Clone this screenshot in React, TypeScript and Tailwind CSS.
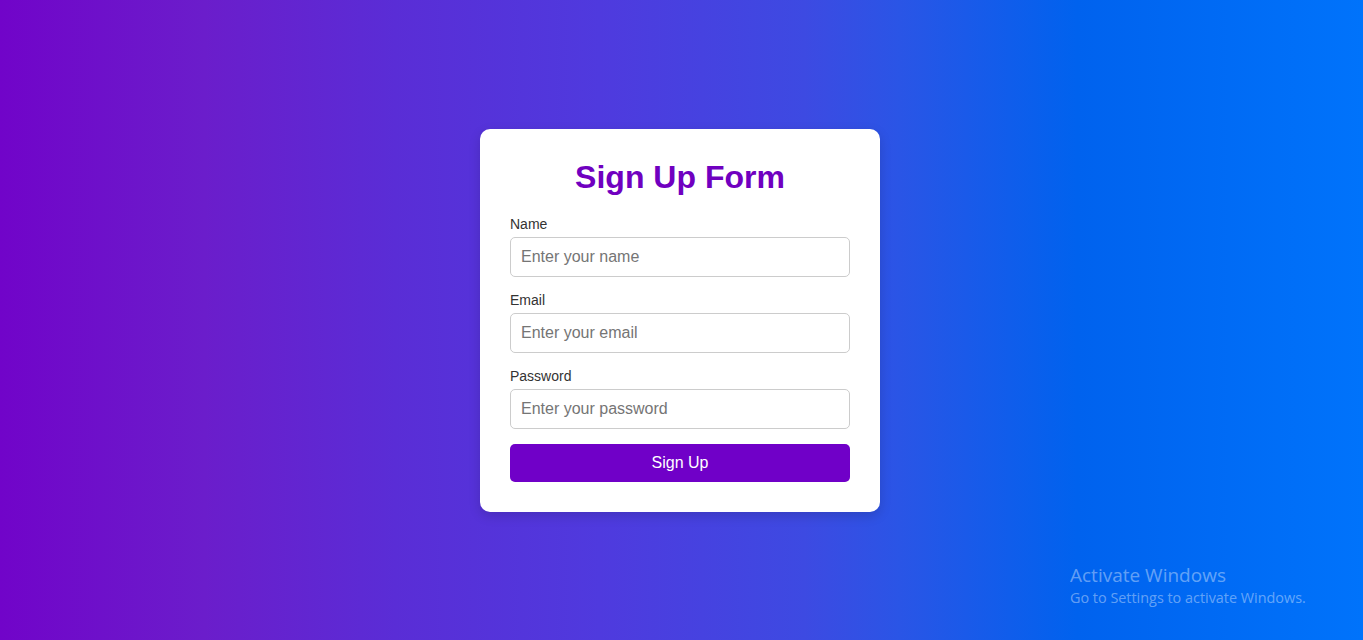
export default function App() {
  return (
    <div className="w-full h-[640px] pr-[3px] flex items-center justify-center bg-[linear-gradient(to_right,#7104c9_0%,#6b1dcb_15%,#5a2dd6_29%,#4f3ade_44%,#3d4ae2_59%,#2a55e6_66%,#0062ee_79%,#0073fb_100%)] font-['Liberation_Sans',Arial,sans-serif] relative">
      <div className="w-[400px] bg-white rounded-[10px] p-[30px] shadow-[0_4px_12px_rgba(0,0,0,0.15)]">
        <h2 className="text-[32px] leading-[37px] font-bold text-center text-[#7000c0] mb-5">Sign Up Form</h2>
        <form className="flex flex-col" onSubmit={(e) => e.preventDefault()}>
          <label className="text-[14px] leading-4 text-[#333] mb-[5px]">Name</label>
          <input
            type="text"
            placeholder="Enter your name"
            className="h-10 px-[10px] border border-[#ccc] rounded-[5px] text-[16px] placeholder:text-[#757575] mb-[15px]"
          />
          <label className="text-[14px] leading-4 text-[#333] mb-[5px]">Email</label>
          <input
            type="email"
            placeholder="Enter your email"
            className="h-10 px-[10px] border border-[#ccc] rounded-[5px] text-[16px] placeholder:text-[#757575] mb-[15px]"
          />
          <label className="text-[14px] leading-4 text-[#333] mb-[5px]">Password</label>
          <input
            type="password"
            placeholder="Enter your password"
            className="h-10 px-[10px] border border-[#ccc] rounded-[5px] text-[16px] placeholder:text-[#757575] mb-[15px]"
          />
          <button type="submit" className="h-[38px] bg-[#7000c8] text-white text-[16px] rounded-[5px]">
            Sign Up
          </button>
        </form>
      </div>
      <div className="absolute left-[1070px] top-[563px] text-white/40 font-['Open_Sans',sans-serif]">
        <div className="text-[19px] leading-6">Activate Windows</div>
        <div className="text-[14.4px] leading-[22px]">Go to Settings to activate Windows.</div>
      </div>
    </div>
  );
}
